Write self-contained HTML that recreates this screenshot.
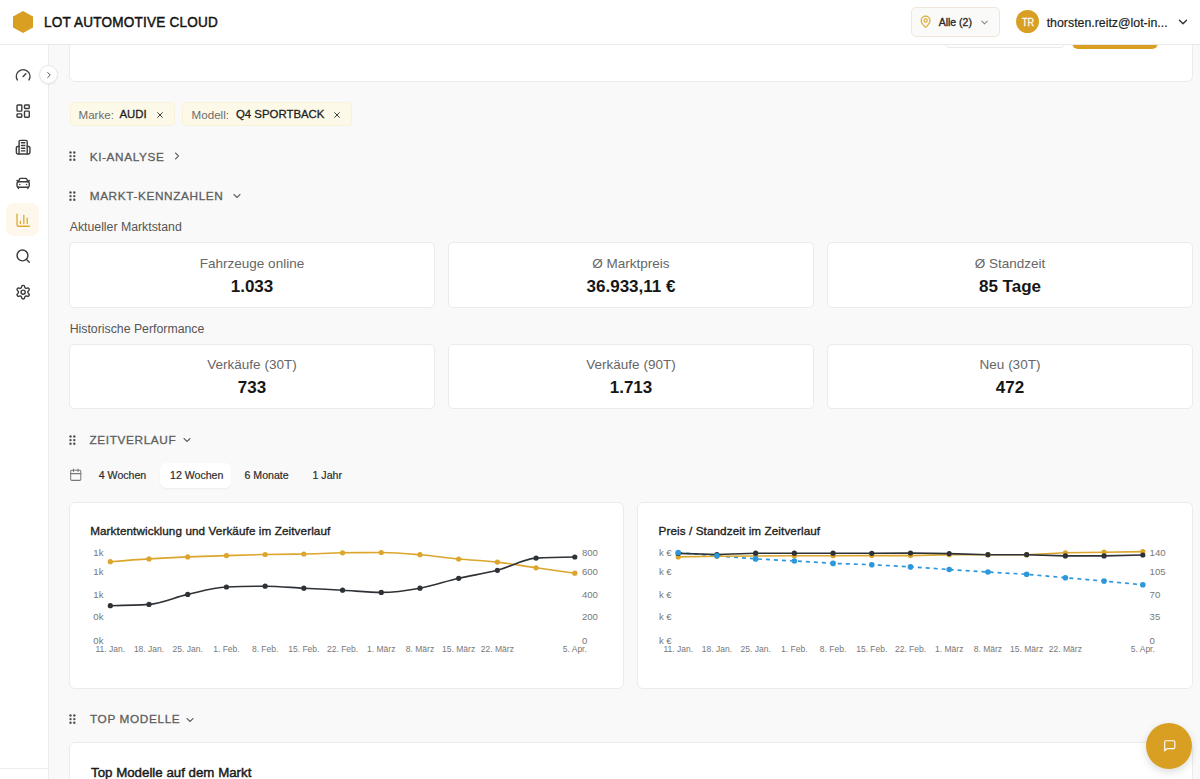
<!DOCTYPE html><html><head><meta charset="utf-8"><style>
html,body{margin:0;padding:0;width:1200px;height:779px;overflow:hidden;background:#f9f9f9;font-family:"Liberation Sans",sans-serif;}
.t{position:absolute;white-space:nowrap;}
svg{position:absolute;overflow:visible;}
</style></head><body>
<div style="position:absolute;left:69px;top:20px;width:1124px;height:62px;box-sizing:border-box;background:#fff;border:1px solid #ebebeb;border-radius:6px;"></div>
<div style="position:absolute;left:944px;top:20px;width:122px;height:28px;box-sizing:border-box;background:#fff;border:1px solid #ebebeb;border-radius:6px;"></div>
<div style="position:absolute;left:1072px;top:20px;width:86px;height:28.5px;box-sizing:border-box;background:#d89f22;border-radius:6px;"></div>
<div style="position:absolute;left:0px;top:0px;width:1200px;height:44.5px;box-sizing:border-box;background:#fff;"></div>
<div style="position:absolute;left:0px;top:44px;width:1200px;height:1px;box-sizing:border-box;background:#e9e9e9;"></div>
<svg style="left:0;top:0" width="60" height="44"><polygon points="23,11 33,16.5 33,27.5 23,33 13,27.5 13,16.5" fill="#d89f22"/></svg>
<div class="t" style="left:43.50px;top:15.07px;font-size:14.8px;line-height:14.8px;font-weight:400;color:#141414;letter-spacing:0.25px;-webkit-text-stroke:0.5px #141414;transform:scaleX(0.915);transform-origin:0 0;">LOT AUTOMOTIVE CLOUD</div>
<div style="position:absolute;left:911px;top:7px;width:89px;height:29.5px;box-sizing:border-box;background:#fafaf9;border:1px solid #efe8d8;border-radius:5px;"></div>
<svg style="left:919.3px;top:15.0px" width="13.2" height="13.2" viewBox="0 0 24 24" fill="none" stroke="#dcab35" stroke-width="2.2" stroke-linecap="round" stroke-linejoin="round"><path d="M20 10c0 4.993-5.539 10.193-7.399 11.799a1 1 0 0 1-1.202 0C9.539 20.193 4 14.993 4 10a8 8 0 0 1 16 0"/><circle cx="12" cy="10" r="3"/></svg>
<div class="t" style="left:938.70px;top:17.21px;font-size:10.5px;line-height:10.5px;font-weight:400;color:#2a2a2a;letter-spacing:0px;-webkit-text-stroke:0.35px #2a2a2a;">Alle (2)</div>
<svg style="left:979px;top:17px" width="11" height="11" viewBox="0 0 24 24" fill="none" stroke="#888" stroke-width="2.2" stroke-linecap="round" stroke-linejoin="round"><path d="m6 9 6 6 6-6"/></svg>
<div style="position:absolute;left:1016.2px;top:10.0px;width:23px;height:23px;border-radius:50%;background:#d89f22;"></div>
<div class="t" style="left:727.80px;width:600px;text-align:center;top:16.67px;font-size:10.6px;line-height:10.6px;font-weight:400;color:#fffdf5;letter-spacing:0px;-webkit-text-stroke:0.3px #fffdf5;transform:scaleX(0.86);transform-origin:50% 0;">TR</div>
<div class="t" style="left:1046.70px;top:16.55px;font-size:12.35px;line-height:12.35px;font-weight:400;color:#1e1e1e;letter-spacing:0px;-webkit-text-stroke:0.2px #1e1e1e;">thorsten.reitz@lot-in...</div>
<svg style="left:1176px;top:15px" width="14" height="14" viewBox="0 0 24 24" fill="none" stroke="#333" stroke-width="2.4" stroke-linecap="round" stroke-linejoin="round"><path d="m6 9 6 6 6-6"/></svg>
<div style="position:absolute;left:0px;top:45px;width:48.5px;height:734px;box-sizing:border-box;background:#fff;"></div>
<div style="position:absolute;left:48.2px;top:45px;width:1px;height:734px;box-sizing:border-box;background:#ececec;"></div>
<div style="position:absolute;left:0px;top:768.2px;width:48.5px;height:1px;box-sizing:border-box;background:#ececec;"></div>
<svg style="left:14.7px;top:66.6px" width="16.3" height="16.3" viewBox="0 0 24 24" fill="none" stroke="#3d3d3d" stroke-width="2.1" stroke-linecap="round" stroke-linejoin="round"><path d="m12 14 4-4"/><path d="M3.34 19a10 10 0 1 1 17.32 0"/></svg>
<svg style="left:14.84px;top:102.9px" width="16.3" height="16.3" viewBox="0 0 24 24" fill="none" stroke="#3d3d3d" stroke-width="2.1" stroke-linecap="round" stroke-linejoin="round"><rect width="7" height="9" x="3" y="3" rx="1"/><rect width="7" height="5" x="14" y="3" rx="1"/><rect width="7" height="9" x="14" y="12" rx="1"/><rect width="7" height="5" x="3" y="16" rx="1"/></svg>
<svg style="left:15.1px;top:139.1px" width="16.3" height="16.3" viewBox="0 0 24 24" fill="none" stroke="#3d3d3d" stroke-width="2.1" stroke-linecap="round" stroke-linejoin="round"><path d="M6 22V4a2 2 0 0 1 2-2h8a2 2 0 0 1 2 2v18"/><path d="M6 11H4a2 2 0 0 0-2 2v7a2 2 0 0 0 2 2h16a2 2 0 0 0 2-2v-7a2 2 0 0 0-2-2h-2"/><path d="M9.5 5.5h5"/><path d="M9.5 9.5h5"/><path d="M9.5 13.5h5"/><path d="M9.5 17.5h5"/></svg>
<svg style="left:14.84px;top:174.9px" width="16.3" height="16.3" viewBox="0 0 24 24" fill="none" stroke="#3d3d3d" stroke-width="2.1" stroke-linecap="round" stroke-linejoin="round"><path d="m21 8-2 2-1.5-3.7A2 2 0 0 0 15.646 5H8.4a2 2 0 0 0-1.903 1.257L5 10 3 8"/><path d="M7 14h.01"/><path d="M17 14h.01"/><rect width="18" height="8" x="3" y="10" rx="2"/><path d="M5 18v2"/><path d="M19 18v2"/></svg>
<div style="position:absolute;left:6.1px;top:203.3px;width:32.5px;height:32.8px;box-sizing:border-box;background:#fdf8eb;border-radius:8px;"></div>
<svg style="left:14.97px;top:211.7px" width="16.3" height="16.3" viewBox="0 0 24 24" fill="none" stroke="#dba930" stroke-width="1.9" stroke-linecap="round" stroke-linejoin="round"><path d="M3 3v16a2 2 0 0 0 2 2h16"/><path d="M18 17V9"/><path d="M13 17V5"/><path d="M8 17v-3"/></svg>
<svg style="left:14.8px;top:247.6px" width="16.3" height="16.3" viewBox="0 0 24 24" fill="none" stroke="#3d3d3d" stroke-width="2.1" stroke-linecap="round" stroke-linejoin="round"><circle cx="11" cy="11" r="8"/><path d="m21 21-4.3-4.3"/></svg>
<svg style="left:15.0px;top:284.1px" width="16.3" height="16.3" viewBox="0 0 24 24" fill="none" stroke="#3d3d3d" stroke-width="2.1" stroke-linecap="round" stroke-linejoin="round"><path d="M12.22 2h-.44a2 2 0 0 0-2 2v.18a2 2 0 0 1-1 1.73l-.43.25a2 2 0 0 1-2 0l-.15-.08a2 2 0 0 0-2.73.73l-.22.38a2 2 0 0 0 .73 2.73l.15.1a2 2 0 0 1 1 1.72v.51a2 2 0 0 1-1 1.74l-.15.09a2 2 0 0 0-.73 2.73l.22.38a2 2 0 0 0 2.73.73l.15-.08a2 2 0 0 1 2 0l.43.25a2 2 0 0 1 1 1.73V20a2 2 0 0 0 2 2h.44a2 2 0 0 0 2-2v-.18a2 2 0 0 1 1-1.73l.43-.25a2 2 0 0 1 2 0l.15.08a2 2 0 0 0 2.73-.73l.22-.39a2 2 0 0 0-.73-2.73l-.15-.08a2 2 0 0 1-1-1.74v-.5a2 2 0 0 1 1-1.74l.15-.09a2 2 0 0 0 .73-2.73l-.22-.38a2 2 0 0 0-2.73-.73l-.15.08a2 2 0 0 1-2 0l-.43-.25a2 2 0 0 1-1-1.73V4a2 2 0 0 0-2-2z"/><circle cx="12" cy="12" r="3"/></svg>
<div style="position:absolute;left:38.9px;top:64.9px;width:19.6px;height:19.6px;box-sizing:border-box;border-radius:50%;background:#fff;border:1px solid #e6e6e6;box-shadow:0 1px 2px rgba(0,0,0,0.06);"></div>
<svg style="left:43.8px;top:69.7px" width="10" height="10" viewBox="0 0 24 24" fill="none" stroke="#555" stroke-width="2.4" stroke-linecap="round" stroke-linejoin="round"><path d="m9 18 6-6-6-6"/></svg>
<div style="position:absolute;left:70px;top:102.3px;width:105px;height:23.4px;box-sizing:border-box;background:#fdf9e9;border:1px solid #faf2d8;border-radius:4px;"></div>
<div class="t" style="left:78.50px;top:108.68px;font-size:11.6px;line-height:11.6px;font-weight:400;color:#6b6b6b;letter-spacing:0px;">Marke:</div>
<div class="t" style="left:119.50px;top:108.85px;font-size:11.4px;line-height:11.4px;font-weight:400;color:#1e1e1e;letter-spacing:0px;-webkit-text-stroke:0.3px #1e1e1e;">AUDI</div>
<svg style="left:157.1px;top:111.7px" width="6" height="6" viewBox="0 0 10 10" fill="none" stroke="#3a3a3a" stroke-width="1.6" stroke-linecap="round"><path d="M1 1 9 9M9 1 1 9"/></svg>
<div style="position:absolute;left:182px;top:102.3px;width:170px;height:23.4px;box-sizing:border-box;background:#fdf9e9;border:1px solid #faf2d8;border-radius:4px;"></div>
<div class="t" style="left:191.60px;top:108.68px;font-size:11.6px;line-height:11.6px;font-weight:400;color:#6b6b6b;letter-spacing:0px;">Modell:</div>
<div class="t" style="left:236.00px;top:108.85px;font-size:11.4px;line-height:11.4px;font-weight:400;color:#1e1e1e;letter-spacing:0px;-webkit-text-stroke:0.3px #1e1e1e;">Q4 SPORTBACK</div>
<svg style="left:333.6px;top:111.7px" width="6" height="6" viewBox="0 0 10 10" fill="none" stroke="#3a3a3a" stroke-width="1.6" stroke-linecap="round"><path d="M1 1 9 9M9 1 1 9"/></svg>
<svg style="left:68.9px;top:151px" width="8" height="11"><circle cx="1.5" cy="1.5" r="1.2" fill="#505050"/><circle cx="1.5" cy="5.1" r="1.2" fill="#505050"/><circle cx="1.5" cy="8.7" r="1.2" fill="#505050"/><circle cx="5.3" cy="1.5" r="1.2" fill="#505050"/><circle cx="5.3" cy="5.1" r="1.2" fill="#505050"/><circle cx="5.3" cy="8.7" r="1.2" fill="#505050"/></svg>
<div class="t" style="left:89.70px;top:151.81px;font-size:11.8px;line-height:11.8px;font-weight:400;color:#5e5e5e;letter-spacing:0.62px;-webkit-text-stroke:0.3px #5e5e5e;">KI-ANALYSE</div>
<svg style="left:170.5px;top:150px" width="12" height="12" viewBox="0 0 24 24" fill="none" stroke="#666" stroke-width="2.2" stroke-linecap="round" stroke-linejoin="round"><path d="m9 18 6-6-6-6"/></svg>
<svg style="left:68.9px;top:190.5px" width="8" height="11"><circle cx="1.5" cy="1.5" r="1.2" fill="#505050"/><circle cx="1.5" cy="5.1" r="1.2" fill="#505050"/><circle cx="1.5" cy="8.7" r="1.2" fill="#505050"/><circle cx="5.3" cy="1.5" r="1.2" fill="#505050"/><circle cx="5.3" cy="5.1" r="1.2" fill="#505050"/><circle cx="5.3" cy="8.7" r="1.2" fill="#505050"/></svg>
<div class="t" style="left:89.70px;top:191.41px;font-size:11.8px;line-height:11.8px;font-weight:400;color:#5e5e5e;letter-spacing:0.62px;-webkit-text-stroke:0.3px #5e5e5e;">MARKT-KENNZAHLEN</div>
<svg style="left:230.5px;top:190px" width="12" height="12" viewBox="0 0 24 24" fill="none" stroke="#666" stroke-width="2.2" stroke-linecap="round" stroke-linejoin="round"><path d="m6 9 6 6 6-6"/></svg>
<div class="t" style="left:69.70px;top:220.79px;font-size:12.3px;line-height:12.3px;font-weight:400;color:#555;letter-spacing:0px;">Aktueller Marktstand</div>
<div style="position:absolute;left:69px;top:242px;width:366px;height:65.5px;box-sizing:border-box;background:#fff;border:1px solid #ebebeb;border-radius:5px;"></div>
<div class="t" style="left:-48.00px;width:600px;text-align:center;top:256.57px;font-size:13.5px;line-height:13.5px;font-weight:400;color:#666;letter-spacing:0px;">Fahrzeuge online</div>
<div class="t" style="left:-48.00px;width:600px;text-align:center;top:277.61px;font-size:17px;line-height:17px;font-weight:700;color:#161616;letter-spacing:0px;">1.033</div>
<div style="position:absolute;left:448px;top:242px;width:366px;height:65.5px;box-sizing:border-box;background:#fff;border:1px solid #ebebeb;border-radius:5px;"></div>
<div class="t" style="left:331.00px;width:600px;text-align:center;top:256.57px;font-size:13.5px;line-height:13.5px;font-weight:400;color:#666;letter-spacing:0px;">Ø Marktpreis</div>
<div class="t" style="left:331.00px;width:600px;text-align:center;top:277.61px;font-size:17px;line-height:17px;font-weight:700;color:#161616;letter-spacing:0px;">36.933,11 €</div>
<div style="position:absolute;left:827px;top:242px;width:366px;height:65.5px;box-sizing:border-box;background:#fff;border:1px solid #ebebeb;border-radius:5px;"></div>
<div class="t" style="left:710.00px;width:600px;text-align:center;top:256.57px;font-size:13.5px;line-height:13.5px;font-weight:400;color:#666;letter-spacing:0px;">Ø Standzeit</div>
<div class="t" style="left:710.00px;width:600px;text-align:center;top:277.61px;font-size:17px;line-height:17px;font-weight:700;color:#161616;letter-spacing:0px;">85 Tage</div>
<div class="t" style="left:69.70px;top:322.99px;font-size:12.3px;line-height:12.3px;font-weight:400;color:#555;letter-spacing:0px;">Historische Performance</div>
<div style="position:absolute;left:69px;top:343.7px;width:366px;height:65.5px;box-sizing:border-box;background:#fff;border:1px solid #ebebeb;border-radius:5px;"></div>
<div class="t" style="left:-48.00px;width:600px;text-align:center;top:358.27px;font-size:13.5px;line-height:13.5px;font-weight:400;color:#666;letter-spacing:0px;">Verkäufe (30T)</div>
<div class="t" style="left:-48.00px;width:600px;text-align:center;top:379.31px;font-size:17px;line-height:17px;font-weight:700;color:#161616;letter-spacing:0px;">733</div>
<div style="position:absolute;left:448px;top:343.7px;width:366px;height:65.5px;box-sizing:border-box;background:#fff;border:1px solid #ebebeb;border-radius:5px;"></div>
<div class="t" style="left:331.00px;width:600px;text-align:center;top:358.27px;font-size:13.5px;line-height:13.5px;font-weight:400;color:#666;letter-spacing:0px;">Verkäufe (90T)</div>
<div class="t" style="left:331.00px;width:600px;text-align:center;top:379.31px;font-size:17px;line-height:17px;font-weight:700;color:#161616;letter-spacing:0px;">1.713</div>
<div style="position:absolute;left:827px;top:343.7px;width:366px;height:65.5px;box-sizing:border-box;background:#fff;border:1px solid #ebebeb;border-radius:5px;"></div>
<div class="t" style="left:710.00px;width:600px;text-align:center;top:358.27px;font-size:13.5px;line-height:13.5px;font-weight:400;color:#666;letter-spacing:0px;">Neu (30T)</div>
<div class="t" style="left:710.00px;width:600px;text-align:center;top:379.31px;font-size:17px;line-height:17px;font-weight:700;color:#161616;letter-spacing:0px;">472</div>
<svg style="left:68.9px;top:434.5px" width="8" height="11"><circle cx="1.5" cy="1.5" r="1.2" fill="#505050"/><circle cx="1.5" cy="5.1" r="1.2" fill="#505050"/><circle cx="1.5" cy="8.7" r="1.2" fill="#505050"/><circle cx="5.3" cy="1.5" r="1.2" fill="#505050"/><circle cx="5.3" cy="5.1" r="1.2" fill="#505050"/><circle cx="5.3" cy="8.7" r="1.2" fill="#505050"/></svg>
<div class="t" style="left:89.50px;top:434.51px;font-size:11.8px;line-height:11.8px;font-weight:400;color:#5e5e5e;letter-spacing:0.62px;-webkit-text-stroke:0.3px #5e5e5e;">ZEITVERLAUF</div>
<svg style="left:180.5px;top:434px" width="12" height="12" viewBox="0 0 24 24" fill="none" stroke="#666" stroke-width="2.2" stroke-linecap="round" stroke-linejoin="round"><path d="m6 9 6 6 6-6"/></svg>
<svg style="left:69px;top:468px" width="13.5" height="13.5" viewBox="0 0 24 24" fill="none" stroke="#777" stroke-width="1.8" stroke-linecap="round" stroke-linejoin="round"><rect width="18" height="18" x="3" y="4" rx="2"/><path d="M3 10h18"/><path d="M8 2v4"/><path d="M16 2v4"/></svg>
<div style="position:absolute;left:159.5px;top:462.5px;width:71px;height:25px;box-sizing:border-box;background:#fff;border-radius:6px;box-shadow:0 1px 2px rgba(0,0,0,0.05);"></div>
<div class="t" style="left:98.75px;top:470.33px;font-size:10.6px;line-height:10.6px;font-weight:400;color:#2e2e2e;letter-spacing:0px;-webkit-text-stroke:0.2px #2e2e2e;">4 Wochen</div>
<div class="t" style="left:170.00px;top:470.33px;font-size:10.6px;line-height:10.6px;font-weight:400;color:#2e2e2e;letter-spacing:0px;-webkit-text-stroke:0.2px #2e2e2e;">12 Wochen</div>
<div class="t" style="left:244.50px;top:470.33px;font-size:10.6px;line-height:10.6px;font-weight:400;color:#2e2e2e;letter-spacing:0px;-webkit-text-stroke:0.2px #2e2e2e;">6 Monate</div>
<div class="t" style="left:312.50px;top:470.33px;font-size:10.6px;line-height:10.6px;font-weight:400;color:#2e2e2e;letter-spacing:0px;-webkit-text-stroke:0.2px #2e2e2e;">1 Jahr</div>
<div style="position:absolute;left:69px;top:501.5px;width:554.8px;height:187.5px;box-sizing:border-box;background:#fff;border:1px solid #ebebeb;border-radius:6px;"></div>
<div style="position:absolute;left:637.2px;top:501.5px;width:555.8px;height:187.5px;box-sizing:border-box;background:#fff;border:1px solid #ebebeb;border-radius:6px;"></div>
<div class="t" style="left:90.20px;top:524.70px;font-size:11.7px;line-height:11.7px;font-weight:400;color:#1e1e1e;letter-spacing:0.1px;-webkit-text-stroke:0.35px #1e1e1e;">Marktentwicklung und Verkäufe im Zeitverlauf</div>
<div class="t" style="left:658.50px;top:524.70px;font-size:11.7px;line-height:11.7px;font-weight:400;color:#1e1e1e;letter-spacing:0.1px;-webkit-text-stroke:0.35px #1e1e1e;">Preis / Standzeit im Zeitverlauf</div>
<div class="t" style="left:-496.50px;width:600px;text-align:right;top:547.68px;font-size:9.6px;line-height:9.6px;font-weight:400;color:#777;letter-spacing:0px;">1k</div>
<div class="t" style="left:-496.50px;width:600px;text-align:right;top:567.38px;font-size:9.6px;line-height:9.6px;font-weight:400;color:#777;letter-spacing:0px;">1k</div>
<div class="t" style="left:-496.50px;width:600px;text-align:right;top:590.28px;font-size:9.6px;line-height:9.6px;font-weight:400;color:#777;letter-spacing:0px;">1k</div>
<div class="t" style="left:-496.50px;width:600px;text-align:right;top:612.18px;font-size:9.6px;line-height:9.6px;font-weight:400;color:#777;letter-spacing:0px;">0k</div>
<div class="t" style="left:-496.50px;width:600px;text-align:right;top:635.68px;font-size:9.6px;line-height:9.6px;font-weight:400;color:#777;letter-spacing:0px;">0k</div>
<div class="t" style="left:581.90px;top:547.68px;font-size:9.6px;line-height:9.6px;font-weight:400;color:#777;letter-spacing:0px;">800</div>
<div class="t" style="left:581.90px;top:567.38px;font-size:9.6px;line-height:9.6px;font-weight:400;color:#777;letter-spacing:0px;">600</div>
<div class="t" style="left:581.90px;top:590.28px;font-size:9.6px;line-height:9.6px;font-weight:400;color:#777;letter-spacing:0px;">400</div>
<div class="t" style="left:581.90px;top:612.18px;font-size:9.6px;line-height:9.6px;font-weight:400;color:#777;letter-spacing:0px;">200</div>
<div class="t" style="left:581.90px;top:635.68px;font-size:9.6px;line-height:9.6px;font-weight:400;color:#777;letter-spacing:0px;">0</div>
<div class="t" style="left:-189.70px;width:600px;text-align:center;top:645.13px;font-size:8.5px;line-height:8.5px;font-weight:400;color:#777;letter-spacing:0px;">11. Jan.</div>
<div class="t" style="left:-150.99px;width:600px;text-align:center;top:645.13px;font-size:8.5px;line-height:8.5px;font-weight:400;color:#777;letter-spacing:0px;">18. Jan.</div>
<div class="t" style="left:-112.28px;width:600px;text-align:center;top:645.13px;font-size:8.5px;line-height:8.5px;font-weight:400;color:#777;letter-spacing:0px;">25. Jan.</div>
<div class="t" style="left:-73.58px;width:600px;text-align:center;top:645.13px;font-size:8.5px;line-height:8.5px;font-weight:400;color:#777;letter-spacing:0px;">1. Feb.</div>
<div class="t" style="left:-34.87px;width:600px;text-align:center;top:645.13px;font-size:8.5px;line-height:8.5px;font-weight:400;color:#777;letter-spacing:0px;">8. Feb.</div>
<div class="t" style="left:3.84px;width:600px;text-align:center;top:645.13px;font-size:8.5px;line-height:8.5px;font-weight:400;color:#777;letter-spacing:0px;">15. Feb.</div>
<div class="t" style="left:42.55px;width:600px;text-align:center;top:645.13px;font-size:8.5px;line-height:8.5px;font-weight:400;color:#777;letter-spacing:0px;">22. Feb.</div>
<div class="t" style="left:81.26px;width:600px;text-align:center;top:645.13px;font-size:8.5px;line-height:8.5px;font-weight:400;color:#777;letter-spacing:0px;">1. März</div>
<div class="t" style="left:119.97px;width:600px;text-align:center;top:645.13px;font-size:8.5px;line-height:8.5px;font-weight:400;color:#777;letter-spacing:0px;">8. März</div>
<div class="t" style="left:158.67px;width:600px;text-align:center;top:645.13px;font-size:8.5px;line-height:8.5px;font-weight:400;color:#777;letter-spacing:0px;">15. März</div>
<div class="t" style="left:197.38px;width:600px;text-align:center;top:645.13px;font-size:8.5px;line-height:8.5px;font-weight:400;color:#777;letter-spacing:0px;">22. März</div>
<div class="t" style="left:274.80px;width:600px;text-align:center;top:645.13px;font-size:8.5px;line-height:8.5px;font-weight:400;color:#777;letter-spacing:0px;">5. Apr.</div>
<svg style="left:0;top:0" width="1200" height="779"><path d="M110.30,561.70C123.20,560.70 136.11,559.70 149.01,558.90C161.91,558.10 174.81,557.45 187.72,556.90C200.62,556.35 213.52,556.00 226.42,555.60C239.33,555.20 252.23,554.77 265.13,554.50C278.04,554.23 290.94,554.28 303.84,554.00C316.74,553.72 329.65,553.00 342.55,552.80C355.45,552.60 368.36,552.50 381.26,552.50C394.16,552.50 407.06,553.62 419.97,554.70C432.87,555.78 445.77,557.77 458.67,559.00C471.58,560.23 484.48,560.63 497.38,562.10C510.29,563.57 523.19,565.95 536.09,567.80C548.99,569.65 561.90,571.42 574.80,573.20" fill="none" stroke="#dca52b" stroke-width="1.6"/><path d="M110.30,605.70C123.20,605.48 136.11,605.27 149.01,604.40C161.91,603.53 174.81,597.30 187.72,594.40C200.62,591.50 213.52,587.53 226.42,587.00C239.33,586.47 252.23,586.20 265.13,586.20C278.04,586.20 290.94,587.53 303.84,588.20C316.74,588.87 329.65,589.50 342.55,590.20C355.45,590.90 368.36,592.40 381.26,592.40C394.16,592.40 407.06,590.55 419.97,588.20C432.87,585.85 445.77,581.28 458.67,578.30C471.58,575.32 484.48,573.67 497.38,570.30C510.29,566.93 523.19,558.83 536.09,558.10C548.99,557.37 561.90,557.18 574.80,557.00" fill="none" stroke="#2e3236" stroke-width="1.6"/><circle cx="110.30" cy="561.70" r="2.6" fill="#dca52b"/><circle cx="149.01" cy="558.90" r="2.6" fill="#dca52b"/><circle cx="187.72" cy="556.90" r="2.6" fill="#dca52b"/><circle cx="226.42" cy="555.60" r="2.6" fill="#dca52b"/><circle cx="265.13" cy="554.50" r="2.6" fill="#dca52b"/><circle cx="303.84" cy="554.00" r="2.6" fill="#dca52b"/><circle cx="342.55" cy="552.80" r="2.6" fill="#dca52b"/><circle cx="381.26" cy="552.50" r="2.6" fill="#dca52b"/><circle cx="419.97" cy="554.70" r="2.6" fill="#dca52b"/><circle cx="458.67" cy="559.00" r="2.6" fill="#dca52b"/><circle cx="497.38" cy="562.10" r="2.6" fill="#dca52b"/><circle cx="536.09" cy="567.80" r="2.6" fill="#dca52b"/><circle cx="574.80" cy="573.20" r="2.6" fill="#dca52b"/><circle cx="110.30" cy="605.70" r="2.6" fill="#2e3236"/><circle cx="149.01" cy="604.40" r="2.6" fill="#2e3236"/><circle cx="187.72" cy="594.40" r="2.6" fill="#2e3236"/><circle cx="226.42" cy="587.00" r="2.6" fill="#2e3236"/><circle cx="265.13" cy="586.20" r="2.6" fill="#2e3236"/><circle cx="303.84" cy="588.20" r="2.6" fill="#2e3236"/><circle cx="342.55" cy="590.20" r="2.6" fill="#2e3236"/><circle cx="381.26" cy="592.40" r="2.6" fill="#2e3236"/><circle cx="419.97" cy="588.20" r="2.6" fill="#2e3236"/><circle cx="458.67" cy="578.30" r="2.6" fill="#2e3236"/><circle cx="497.38" cy="570.30" r="2.6" fill="#2e3236"/><circle cx="536.09" cy="558.10" r="2.6" fill="#2e3236"/><circle cx="574.80" cy="557.00" r="2.6" fill="#2e3236"/></svg>
<div class="t" style="left:71.70px;width:600px;text-align:right;top:547.68px;font-size:9.6px;line-height:9.6px;font-weight:400;color:#777;letter-spacing:0px;">k €</div>
<div class="t" style="left:71.70px;width:600px;text-align:right;top:567.38px;font-size:9.6px;line-height:9.6px;font-weight:400;color:#777;letter-spacing:0px;">k €</div>
<div class="t" style="left:71.70px;width:600px;text-align:right;top:590.28px;font-size:9.6px;line-height:9.6px;font-weight:400;color:#777;letter-spacing:0px;">k €</div>
<div class="t" style="left:71.70px;width:600px;text-align:right;top:612.18px;font-size:9.6px;line-height:9.6px;font-weight:400;color:#777;letter-spacing:0px;">k €</div>
<div class="t" style="left:71.70px;width:600px;text-align:right;top:635.68px;font-size:9.6px;line-height:9.6px;font-weight:400;color:#777;letter-spacing:0px;">k €</div>
<div class="t" style="left:1149.60px;top:547.68px;font-size:9.6px;line-height:9.6px;font-weight:400;color:#777;letter-spacing:0px;">140</div>
<div class="t" style="left:1149.60px;top:567.38px;font-size:9.6px;line-height:9.6px;font-weight:400;color:#777;letter-spacing:0px;">105</div>
<div class="t" style="left:1149.60px;top:590.28px;font-size:9.6px;line-height:9.6px;font-weight:400;color:#777;letter-spacing:0px;">70</div>
<div class="t" style="left:1149.60px;top:612.18px;font-size:9.6px;line-height:9.6px;font-weight:400;color:#777;letter-spacing:0px;">35</div>
<div class="t" style="left:1149.60px;top:635.68px;font-size:9.6px;line-height:9.6px;font-weight:400;color:#777;letter-spacing:0px;">0</div>
<div class="t" style="left:378.20px;width:600px;text-align:center;top:645.13px;font-size:8.5px;line-height:8.5px;font-weight:400;color:#777;letter-spacing:0px;">11. Jan.</div>
<div class="t" style="left:416.92px;width:600px;text-align:center;top:645.13px;font-size:8.5px;line-height:8.5px;font-weight:400;color:#777;letter-spacing:0px;">18. Jan.</div>
<div class="t" style="left:455.63px;width:600px;text-align:center;top:645.13px;font-size:8.5px;line-height:8.5px;font-weight:400;color:#777;letter-spacing:0px;">25. Jan.</div>
<div class="t" style="left:494.35px;width:600px;text-align:center;top:645.13px;font-size:8.5px;line-height:8.5px;font-weight:400;color:#777;letter-spacing:0px;">1. Feb.</div>
<div class="t" style="left:533.07px;width:600px;text-align:center;top:645.13px;font-size:8.5px;line-height:8.5px;font-weight:400;color:#777;letter-spacing:0px;">8. Feb.</div>
<div class="t" style="left:571.78px;width:600px;text-align:center;top:645.13px;font-size:8.5px;line-height:8.5px;font-weight:400;color:#777;letter-spacing:0px;">15. Feb.</div>
<div class="t" style="left:610.50px;width:600px;text-align:center;top:645.13px;font-size:8.5px;line-height:8.5px;font-weight:400;color:#777;letter-spacing:0px;">22. Feb.</div>
<div class="t" style="left:649.22px;width:600px;text-align:center;top:645.13px;font-size:8.5px;line-height:8.5px;font-weight:400;color:#777;letter-spacing:0px;">1. März</div>
<div class="t" style="left:687.93px;width:600px;text-align:center;top:645.13px;font-size:8.5px;line-height:8.5px;font-weight:400;color:#777;letter-spacing:0px;">8. März</div>
<div class="t" style="left:726.65px;width:600px;text-align:center;top:645.13px;font-size:8.5px;line-height:8.5px;font-weight:400;color:#777;letter-spacing:0px;">15. März</div>
<div class="t" style="left:765.37px;width:600px;text-align:center;top:645.13px;font-size:8.5px;line-height:8.5px;font-weight:400;color:#777;letter-spacing:0px;">22. März</div>
<div class="t" style="left:842.80px;width:600px;text-align:center;top:645.13px;font-size:8.5px;line-height:8.5px;font-weight:400;color:#777;letter-spacing:0px;">5. Apr.</div>
<svg style="left:0;top:0" width="1200" height="779"><path d="M678.20,552.60 L716.92,555.80 L755.63,558.90 L794.35,561.00 L833.07,563.40 L871.78,564.70 L910.50,566.90 L949.22,569.50 L987.93,572.00 L1026.65,574.30 L1065.37,577.70 L1104.08,581.10 L1142.80,584.80" fill="none" stroke="#2b98dc" stroke-width="1.7" stroke-dasharray="4 4"/><path d="M678.20,556.90 L716.92,556.30 L755.63,556.00 L794.35,555.80 L833.07,555.70 L871.78,555.60 L910.50,555.60 L949.22,554.70 L987.93,554.70 L1026.65,554.70 L1065.37,552.80 L1104.08,552.20 L1142.80,551.60" fill="none" stroke="#dca52b" stroke-width="1.6"/><path d="M678.20,553.40 L716.92,554.50 L755.63,553.20 L794.35,553.20 L833.07,553.20 L871.78,553.30 L910.50,553.00 L949.22,553.60 L987.93,554.70 L1026.65,554.70 L1065.37,555.90 L1104.08,555.90 L1142.80,555.00" fill="none" stroke="#2e3236" stroke-width="1.6"/><circle cx="678.20" cy="556.90" r="2.6" fill="#dca52b"/><circle cx="716.92" cy="556.30" r="2.6" fill="#dca52b"/><circle cx="755.63" cy="556.00" r="2.6" fill="#dca52b"/><circle cx="794.35" cy="555.80" r="2.6" fill="#dca52b"/><circle cx="833.07" cy="555.70" r="2.6" fill="#dca52b"/><circle cx="871.78" cy="555.60" r="2.6" fill="#dca52b"/><circle cx="910.50" cy="555.60" r="2.6" fill="#dca52b"/><circle cx="949.22" cy="554.70" r="2.6" fill="#dca52b"/><circle cx="987.93" cy="554.70" r="2.6" fill="#dca52b"/><circle cx="1026.65" cy="554.70" r="2.6" fill="#dca52b"/><circle cx="1065.37" cy="552.80" r="2.6" fill="#dca52b"/><circle cx="1104.08" cy="552.20" r="2.6" fill="#dca52b"/><circle cx="1142.80" cy="551.60" r="2.6" fill="#dca52b"/><circle cx="678.20" cy="553.40" r="2.6" fill="#2e3236"/><circle cx="716.92" cy="554.50" r="2.6" fill="#2e3236"/><circle cx="755.63" cy="553.20" r="2.6" fill="#2e3236"/><circle cx="794.35" cy="553.20" r="2.6" fill="#2e3236"/><circle cx="833.07" cy="553.20" r="2.6" fill="#2e3236"/><circle cx="871.78" cy="553.30" r="2.6" fill="#2e3236"/><circle cx="910.50" cy="553.00" r="2.6" fill="#2e3236"/><circle cx="949.22" cy="553.60" r="2.6" fill="#2e3236"/><circle cx="987.93" cy="554.70" r="2.6" fill="#2e3236"/><circle cx="1026.65" cy="554.70" r="2.6" fill="#2e3236"/><circle cx="1065.37" cy="555.90" r="2.6" fill="#2e3236"/><circle cx="1104.08" cy="555.90" r="2.6" fill="#2e3236"/><circle cx="1142.80" cy="555.00" r="2.6" fill="#2e3236"/><circle cx="678.20" cy="552.60" r="2.8" fill="#2b98dc"/><circle cx="716.92" cy="555.80" r="2.8" fill="#2b98dc"/><circle cx="755.63" cy="558.90" r="2.8" fill="#2b98dc"/><circle cx="794.35" cy="561.00" r="2.8" fill="#2b98dc"/><circle cx="833.07" cy="563.40" r="2.8" fill="#2b98dc"/><circle cx="871.78" cy="564.70" r="2.8" fill="#2b98dc"/><circle cx="910.50" cy="566.90" r="2.8" fill="#2b98dc"/><circle cx="949.22" cy="569.50" r="2.8" fill="#2b98dc"/><circle cx="987.93" cy="572.00" r="2.8" fill="#2b98dc"/><circle cx="1026.65" cy="574.30" r="2.8" fill="#2b98dc"/><circle cx="1065.37" cy="577.70" r="2.8" fill="#2b98dc"/><circle cx="1104.08" cy="581.10" r="2.8" fill="#2b98dc"/><circle cx="1142.80" cy="584.80" r="2.8" fill="#2b98dc"/></svg>
<svg style="left:68.9px;top:714px" width="8" height="11"><circle cx="1.5" cy="1.5" r="1.2" fill="#505050"/><circle cx="1.5" cy="5.1" r="1.2" fill="#505050"/><circle cx="1.5" cy="8.7" r="1.2" fill="#505050"/><circle cx="5.3" cy="1.5" r="1.2" fill="#505050"/><circle cx="5.3" cy="5.1" r="1.2" fill="#505050"/><circle cx="5.3" cy="8.7" r="1.2" fill="#505050"/></svg>
<div class="t" style="left:90.00px;top:714.01px;font-size:11.8px;line-height:11.8px;font-weight:400;color:#5e5e5e;letter-spacing:0.62px;-webkit-text-stroke:0.3px #5e5e5e;">TOP MODELLE</div>
<svg style="left:184px;top:714px" width="12" height="12" viewBox="0 0 24 24" fill="none" stroke="#666" stroke-width="2.2" stroke-linecap="round" stroke-linejoin="round"><path d="m6 9 6 6 6-6"/></svg>
<div style="position:absolute;left:69px;top:742.2px;width:1124px;height:60px;box-sizing:border-box;background:#fff;border:1px solid #ebebeb;border-radius:6px;"></div>
<div class="t" style="left:91.00px;top:765.74px;font-size:13.3px;line-height:13.3px;font-weight:400;color:#1a1a1a;letter-spacing:0px;-webkit-text-stroke:0.45px #1a1a1a;">Top Modelle auf dem Markt</div>
<div style="position:absolute;left:1146.3px;top:722.9px;width:46px;height:46px;border-radius:50%;background:#d89f22;box-shadow:0 3px 8px rgba(0,0,0,0.15);"></div>
<svg style="left:1162.5px;top:739.2px" width="13.5" height="13.5" viewBox="0 0 24 24" fill="none" stroke="#fff" stroke-width="2" stroke-linecap="round" stroke-linejoin="round"><path d="M21 15a2 2 0 0 1-2 2H7l-4 4V5a2 2 0 0 1 2-2h14a2 2 0 0 1 2 2z"/></svg>
</body></html>
